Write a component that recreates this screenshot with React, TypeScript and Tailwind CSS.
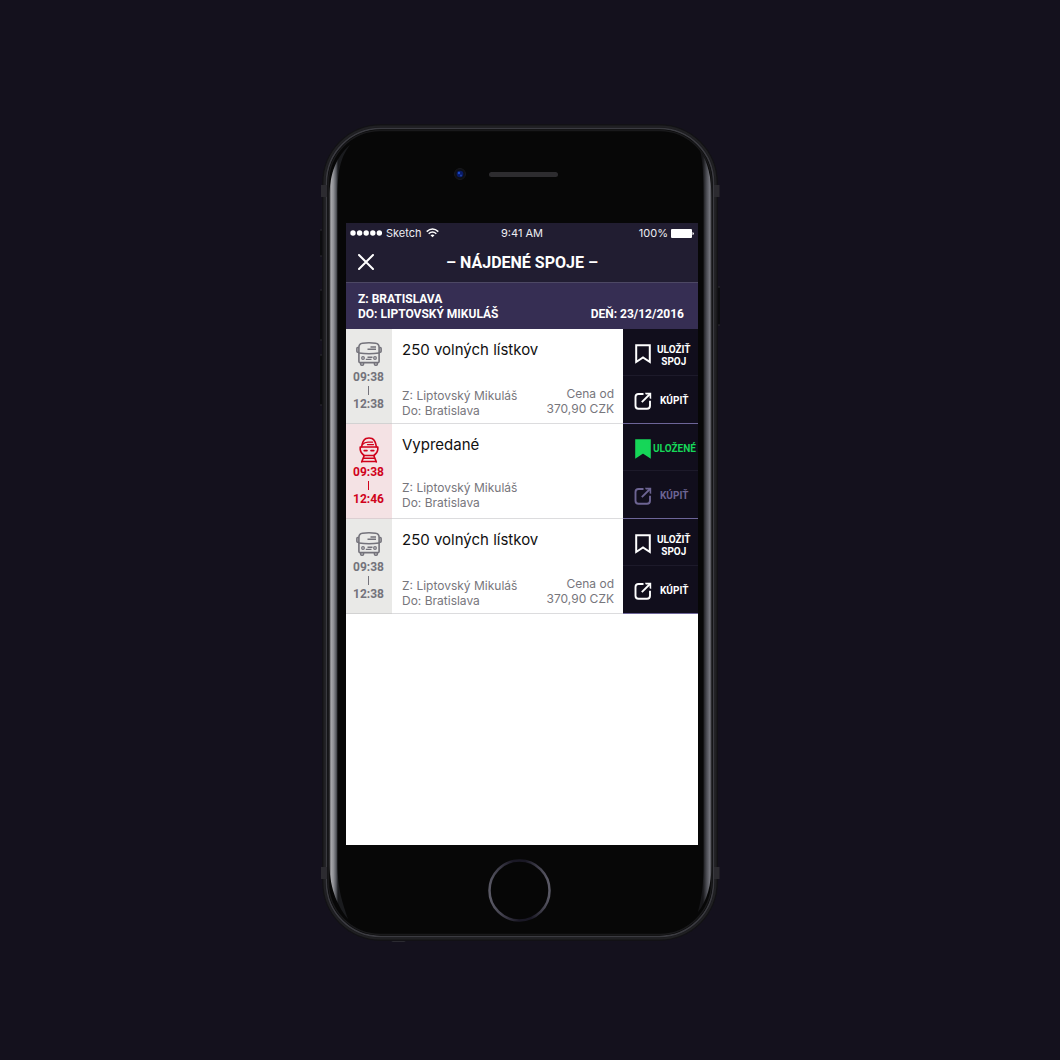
import React from "react";

type Connection = {
  id: string;
  vehicle: "bus" | "train";
  departure: string;
  arrival: string;
  title: string;
  from: string;
  to: string;
  price?: string;
  saved: boolean;
};

const connections: Connection[] = [
  { id: "a", vehicle: "bus", departure: "09:38", arrival: "12:38", title: "250 volných lístkov", from: "Liptovský Mikuláš", to: "Bratislava", price: "370,90 CZK", saved: false },
  { id: "b", vehicle: "train", departure: "09:38", arrival: "12:46", title: "Vypredané", from: "Liptovský Mikuláš", to: "Bratislava", saved: true },
  { id: "c", vehicle: "bus", departure: "09:38", arrival: "12:38", title: "250 volných lístkov", from: "Liptovský Mikuláš", to: "Bratislava", price: "370,90 CZK", saved: false },
];

function PhoneBody() {
  return (
    <svg className="absolute inset-0 h-full w-full" viewBox="0 0 400 822" preserveAspectRatio="none" aria-hidden="true">
      <defs>
        <linearGradient id="glareL" x1="9" x2="18" y1="0" y2="0" gradientUnits="userSpaceOnUse">
          <stop offset="0" stopColor="#3c3c40" />
          <stop offset=".25" stopColor="#a6a6aa" />
          <stop offset=".5" stopColor="#8e8f94" />
          <stop offset=".8" stopColor="#55575d" />
          <stop offset="1" stopColor="#1a1b1e" />
        </linearGradient>
        <linearGradient id="glareR" x1="383" x2="392" y1="0" y2="0" gradientUnits="userSpaceOnUse">
          <stop offset="0" stopColor="#17171a" />
          <stop offset=".4" stopColor="#4b4c53" />
          <stop offset=".75" stopColor="#74757d" />
          <stop offset="1" stopColor="#2a2a2e" />
        </linearGradient>
      </defs>
      <g fill="#0c0c0f" stroke="#2b2a31" strokeWidth="1">
        <rect x="-1.5" y="110" width="5" height="26" rx="1" />
        <rect x="-1.5" y="170" width="5" height="50" rx="1" />
        <rect x="-1.5" y="235" width="5" height="50" rx="1" />
        <rect x="396.5" y="167" width="5" height="38" rx="1" />
        <rect x="71" y="816" width="15" height="5.500" rx="2" />
      </g>
      <rect x="2.5" y="4.5" width="395" height="816" rx="58" fill="#151517" stroke="#121115" />
      <rect x="4.5" y="6.5" width="391" height="812" rx="56" fill="none" stroke="#202023" strokeWidth="2" />
      <rect x="6.5" y="8.5" width="387" height="808" rx="54" fill="#070707" stroke="#3b3b41" strokeWidth="1.6" />
      <rect x="8.5" y="10.5" width="383" height="804" rx="52" fill="#070707" stroke="#19191b" strokeWidth="1.5" />
      <path d="M30 25C17 36 9.500 52 9.500 78V744C9.500 770 19 788 28 799C23 784 17.500 770 17.500 744V78C17.500 52 20 38 30 25Z" fill="url(#glareL)" />
      <path d="M380 30C388 42 391.500 57 391.500 78V744C391.500 765 387 781 378 792C382 777 383.500 764 383.500 744V78C383.500 56 383 42 380 30Z" fill="url(#glareR)" />
      <g fill="#2c2b30">
        <rect x="1" y="65" width="6" height="12" />
        <rect x="394" y="65" width="5.500" height="12" />
        <rect x="1" y="747" width="6" height="12" />
        <rect x="394" y="747" width="5.500" height="12" />
      </g>
    </svg>
  );
}

function BusIcon() {
  return (
    <svg className="h-6 w-[26px]" viewBox="0 0 26 24" fill="none" stroke="currentColor" strokeWidth="1.6" aria-hidden="true">
      <path d="M2.900 19.600V5.500Q2.900 1.700 6.500 1.200Q13 .4 19.500 1.200Q23.100 1.700 23.100 5.500V19.600Q23.100 20.600 22.100 20.600H3.900Q2.900 20.600 2.900 19.600Z" />
      <path d="M2.900 11Q13 12.500 23.100 11M4.700 20.600V22.200Q4.700 23.200 5.700 23.200H6.500Q7.500 23.200 7.500 22.200V20.600M18.500 20.600V22.200Q18.500 23.200 19.500 23.200H20.300Q21.300 23.200 21.300 22.200V20.600" />
      <path d="M2.900 5.500H1.700Q.9 5.500 .9 6.500V9.300Q.9 10.300 1.700 10.300H2.900M23.100 5.500H24.300Q25.100 5.500 25.100 6.500V9.300Q25.100 10.300 24.300 10.300H23.100" />
      <path d="M14.500 5H20M11.500 7.200H20" strokeWidth="1.400" />
      <circle cx="7" cy="16" r="1.300" strokeWidth="1.300" />
      <circle cx="19" cy="16" r="1.300" strokeWidth="1.300" />
      <path d="M11.500 15.200H16.500M9.800 17.400H15.500" strokeWidth="1.400" />
    </svg>
  );
}

function TrainIcon() {
  return (
    <svg className="h-[26px] w-5" viewBox="0 0 20 26" fill="none" stroke="currentColor" strokeWidth="1.6" strokeLinejoin="round" strokeLinecap="round" aria-hidden="true">
      <path d="M2.600 9.800C3.200 5.500 5 2.500 7 1.500Q10 .6 13 1.500C15 2.500 16.800 5.500 17.400 9.800" />
      <path d="M1.200 10H18.800V12.500Q18.500 15.800 15 18.500H5Q1.500 15.800 1.200 12.500Z" />
      <path d="M3.500 7.500Q5.500 5.400 9 5.200H13.500M8.500 7.600H14.500" strokeWidth="1.300" />
      <path d="M5.300 13.600H7.900M12.100 13.600H14.700" strokeWidth="1.900" />
      <path d="M5.200 18.500L2.700 24.900M14.800 18.500L17.300 24.900M4.500 21.300H15.500M3 24.500H17" />
    </svg>
  );
}

function BookmarkIcon({ filled }: { filled: boolean }) {
  return (
    <svg className="h-5 w-4 shrink-0" viewBox="0 0 16 20" fill={filled ? "currentColor" : "none"} stroke="currentColor" strokeWidth="2" aria-hidden="true">
      <path d="M1.200 1.200H14.800V18L8 13.500L1.200 18Z" />
    </svg>
  );
}

function ShareIcon() {
  return (
    <svg className="h-[18px] w-[18px] shrink-0" viewBox="0 0 18 18" fill="none" stroke="currentColor" strokeWidth="1.900" aria-hidden="true">
      <path d="M9.500 2H4.500Q1.500 2 1.500 5V13.800Q1.500 16.800 4.500 16.800H13Q16 16.800 16 13.800V8.800" />
      <path d="M7.800 10.200L16 2" />
      <path d="M11 .8H17.200V7L15.600 6.200V2.400H11.800Z" fill="currentColor" stroke="none" />
    </svg>
  );
}

function StatusBar() {
  return (
    <div className="grid h-5 grid-cols-3 items-center px-1 font-['Inter'] text-[11px] leading-5 text-[#ededf2]">
      <div className="flex items-center gap-1">
        <svg className="h-[6px] w-8" viewBox="0 0 32 6" fill="#fff" aria-hidden="true">
          <circle cx="3" cy="3" r="2.700" />
          <circle cx="9.600" cy="3" r="2.700" />
          <circle cx="16.200" cy="3" r="2.700" />
          <circle cx="22.800" cy="3" r="2.700" />
          <circle cx="29.400" cy="3" r="2.700" />
        </svg>
        <span>Sketch</span>
        <svg className="h-[10px] w-[13px]" viewBox="0 0 13 10" fill="none" stroke="#fff" strokeWidth="1.500" aria-hidden="true">
          <path d="M.7 3.600Q6.500 -1.600 12.300 3.600M2.700 5.700Q6.500 2.300 10.300 5.700" />
          <path d="M6.500 9.300L4.500 7.200Q6.500 5.600 8.500 7.200Z" fill="#fff" stroke="none" />
        </svg>
      </div>
      <div className="text-center">9:41 AM</div>
      <div className="flex items-center justify-end gap-[3px]">
        <span>100%</span>
        <svg className="h-[9px] w-[23px]" viewBox="0 0 23 9" fill="#fff" aria-hidden="true">
          <rect x="0" y="0" width="21" height="9" rx="1" />
          <path d="M21.500 3Q23 3.500 23 4.500Q23 5.500 21.500 6Z" />
        </svg>
      </div>
    </div>
  );
}

function ConnectionRow({ item }: { item: Connection }) {
  const train = item.vehicle === "train";
  return (
    <li className="flex h-[95px]">
      <div
        className={
          "flex w-[46px] shrink-0 flex-col items-center border-b pt-[13px] pr-px font-['Roboto'] text-xs leading-[14px] font-bold " +
          (train ? "border-[#dccfd2] bg-[#f4e2e4] text-[#d0021b]" : "border-[#d2d2d2] bg-[#e9e9e7] text-[#74737b]")
        }
      >
        <div className="flex h-7 items-start">{train ? <TrainIcon /> : <BusIcon />}</div>
        <time>{item.departure}</time>
        <span className="my-[2px] h-[9px] w-px bg-current" />
        <time>{item.arrival}</time>
      </div>

      <div
        className={
          "flex min-w-0 flex-1 flex-col justify-between border-b border-[#dcdcde] bg-white pt-[9px] pr-[9px] pl-[10px] font-['Inter'] " +
          (item.price ? "pb-[5px]" : "pb-2")
        }
      >
        <h2 className="text-[15px] leading-6 text-[#111]">{item.title}</h2>
        <div className="flex items-end justify-between text-xs leading-[15px] whitespace-nowrap text-[#77767c]">
          <p>
            Z: {item.from}
            <br />
            Do: {item.to}
          </p>
          {item.price && (
            <p className="pb-[2px] text-right">
              Cena od
              <br />
              {item.price}
            </p>
          )}
        </div>
      </div>

      <div className="flex w-[75px] shrink-0 flex-col border-b border-[#6d6598] bg-[#110e1c] font-['Roboto'] text-[10px] leading-3 font-bold text-white">
        <button type="button" className={"flex h-[47px] items-center border-b border-[#1d1a2a] pt-[3px] pl-3 " + (item.saved ? "gap-[2px] text-[#16d658]" : "gap-[6px]")}>
          <BookmarkIcon filled={item.saved} />
          {item.saved ? (
            <span>ULOŽENÉ</span>
          ) : (
            <span className="pt-1 text-center">
              ULOŽIŤ
              <br />
              SPOJ
            </span>
          )}
        </button>
        <button type="button" disabled={item.saved} className={"flex flex-1 items-center gap-2 pt-[3px] pl-[11px] " + (item.saved ? "text-[#6d6493]" : "text-white")}>
          <ShareIcon />
          <span>KÚPIŤ</span>
        </button>
      </div>
    </li>
  );
}

export default function App() {
  return (
    <main className="flex min-h-screen items-start justify-center bg-[#14111d] pt-[120px] pr-5 pb-[118px] font-['Inter',sans-serif]">
      <div className="relative w-full max-w-[400px] pr-[22px] pl-[26px]">
        <PhoneBody />

        <div className="relative flex h-[103px] items-start justify-center pt-[48px] pr-8">
          <div className="flex items-center gap-[23px]">
            <svg className="h-3 w-3" viewBox="0 0 12 12" aria-hidden="true">
              <circle cx="6" cy="6" r="5.500" fill="#0e1018" stroke="#1a1a1d" />
              <circle cx="6" cy="6" r="3.300" fill="#081a66" />
              <circle cx="5" cy="5" r="1.200" fill="#1a49c4" />
              <circle cx="7" cy="7.500" r="1" fill="#2342a0" />
            </svg>
            <div className="h-[5px] w-[69px] rounded-full bg-[#2d2c2f]" />
          </div>
        </div>

        <div className="relative flex min-h-[622px] flex-col bg-white">
          <header className="bg-[#211d31] text-white">
            <StatusBar />
            <div className="grid h-10 grid-cols-[40px_1fr_40px] items-center border-b border-[#4d4864]">
              <button type="button" aria-label="Zavrieť" className="pb-[2px] pl-3">
                <svg className="h-4 w-4" viewBox="0 0 16 16" stroke="#fff" strokeWidth="2" strokeLinecap="round" aria-hidden="true">
                  <path d="M1 1L15 15M15 1L1 15" />
                </svg>
              </button>
              <h1 className="text-center font-['Roboto'] text-base leading-6 font-bold">– NÁJDENÉ SPOJE –</h1>
            </div>
          </header>

          <section className="flex h-[46px] items-end justify-between bg-[#362e53] pr-[14px] pb-[7px] pl-3 font-['Roboto'] text-xs leading-[15px] font-bold text-white">
            <p>
              Z: BRATISLAVA
              <br />
              DO: LIPTOVSKÝ MIKULÁŠ
            </p>
            <p>DEŇ: 23/12/2016</p>
          </section>

          <ul>
            {connections.map((item) => (
              <ConnectionRow key={item.id} item={item} />
            ))}
          </ul>
        </div>

        <div className="relative flex h-[97px] justify-center pt-[14px] pr-[5px]">
          <button type="button" aria-label="Domov" className="h-[63px] w-[63px]">
            <svg className="h-full w-full" viewBox="0 0 63 63" aria-hidden="true">
              <defs>
                <linearGradient id="home" x1="0" x2="1" y1=".6" y2=".5">
                  <stop offset="0" stopColor="#5b5a66" />
                  <stop offset=".45" stopColor="#1a1825" />
                  <stop offset=".65" stopColor="#1a1825" />
                  <stop offset="1" stopColor="#5b5a66" />
                </linearGradient>
              </defs>
              <circle cx="31.500" cy="31.500" r="30" fill="#060606" stroke="url(#home)" strokeWidth="2.500" />
            </svg>
          </button>
        </div>
      </div>
    </main>
  );
}
